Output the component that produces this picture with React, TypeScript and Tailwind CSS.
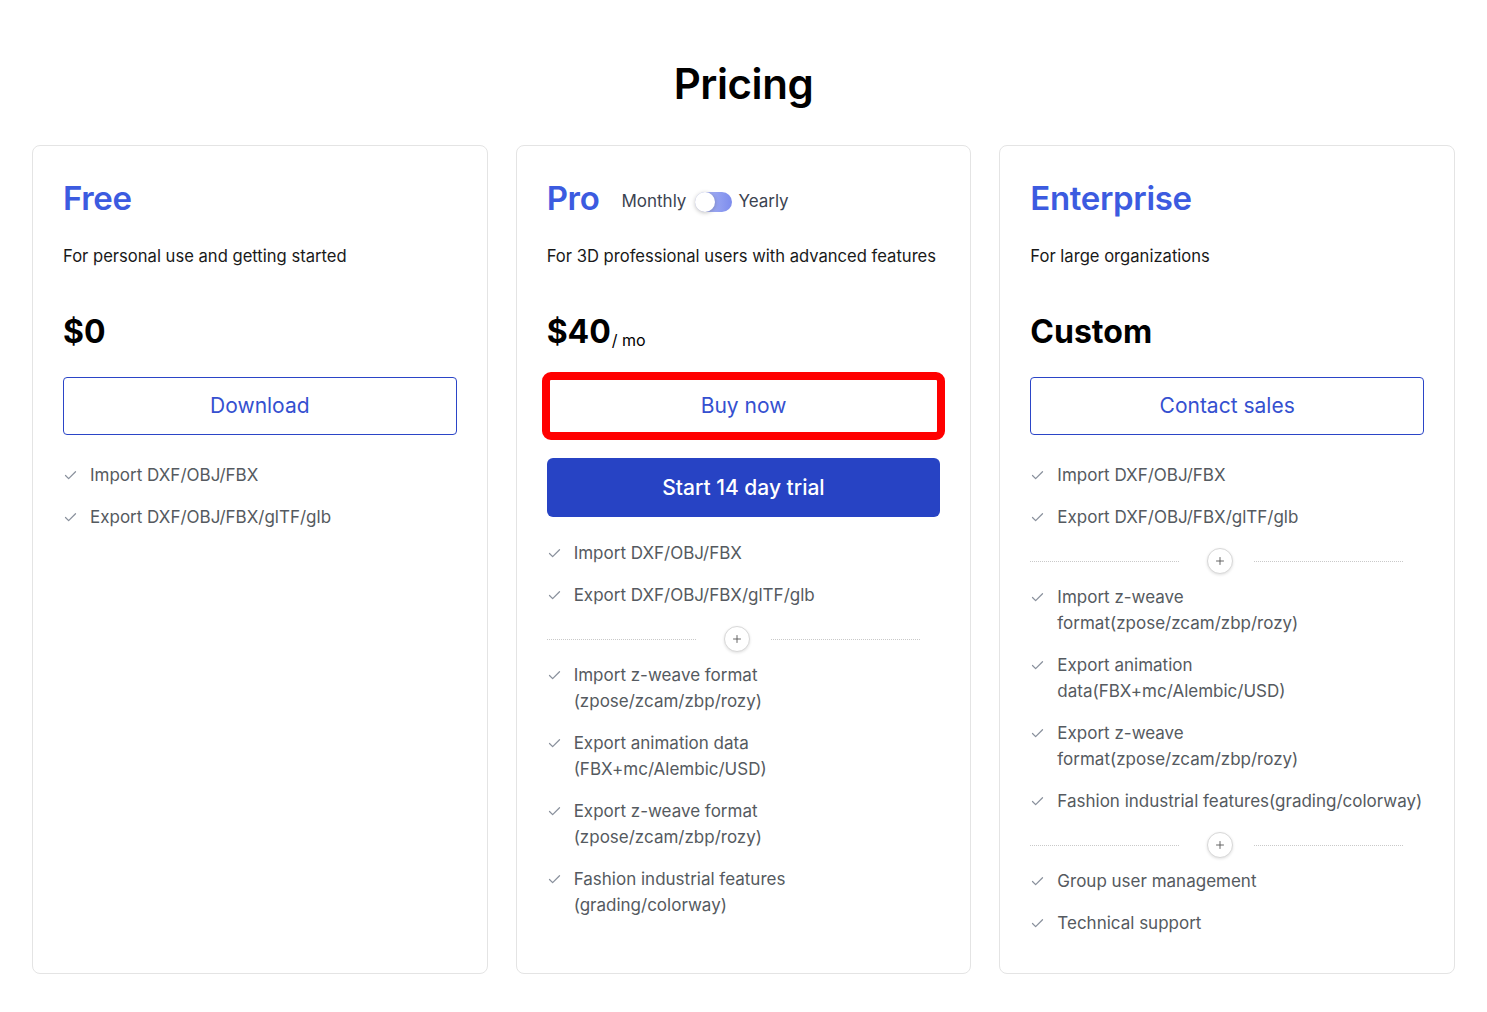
import { Check, Plus } from "lucide-react";

type Item = string | string[] | "divider";

const Feature = ({ text }: { text: string | string[] }) => {
  const lines = Array.isArray(text) ? text : [text];
  return (
    <li className="flex items-start">
      <span className="flex h-[26px] w-[27px] shrink-0 items-center">
        <Check className="h-[15px] w-[15px] text-[#8a919d]" strokeWidth={2} />
      </span>
      <span className="text-[17px] leading-[26px] text-[#555a60]">
        {lines.map((l) => (
          <span key={l} className="block">
            {l}
          </span>
        ))}
      </span>
    </li>
  );
};

const Divider = () => (
  <li className="mt-[2px] -mb-[6px] flex h-[26px] items-center">
    <span className="w-[149px] border-t border-dotted border-[#c9c9c9]" />
    <span className="ml-[28px] flex h-[26px] w-[26px] items-center justify-center rounded-full border border-[#d8d8d8] bg-white shadow-[0_1px_3px_rgba(0,0,0,0.12)]">
      <Plus className="h-[12px] w-[12px] text-[#555]" strokeWidth={1.8} />
    </span>
    <span className="ml-[21px] w-[149px] border-t border-dotted border-[#c9c9c9]" />
  </li>
);

const Features = ({ items, className }: { items: Item[]; className: string }) => (
  <ul className={`flex flex-col gap-4 ${className}`}>
    {items.map((it, i) =>
      it === "divider" ? <Divider key={i} /> : <Feature key={i} text={it} />
    )}
  </ul>
);

const OutlineButton = ({ label, highlight }: { label: string; highlight?: boolean }) => (
  <button
    className={`mt-[25px] h-[58px] w-full rounded-[4px] border border-[#2b45c7] bg-white text-[21px] text-[#3550d0] ${
      highlight ? "outline-[8px] outline-offset-[-3px] outline-[#ff0000] outline-solid" : ""
    }`}
  >
    {label}
  </button>
);

const Card = ({ children }: { children: React.ReactNode }) => (
  <div className="flex flex-col rounded-[8px] border border-[#e4e4e4] bg-white px-[30px] pt-[30px] pb-[37px]">
    {children}
  </div>
);

const Title = ({ children }: { children: React.ReactNode }) => (
  <h2 className="text-[33px] leading-[44px] font-semibold tracking-[-0.01em] text-[#3c5be0]">
    {children}
  </h2>
);

const Desc = ({ children }: { children: React.ReactNode }) => (
  <p className="mt-[24px] text-[16.6px] leading-[24px] whitespace-nowrap text-[#1a1a1a]">{children}</p>
);

export default function App() {
  return (
    <div className="min-h-screen bg-white font-['Inter','Noto_Sans',sans-serif] px-[32px] pb-[39px]">
      <h1 className="pt-[56px] text-center text-[42px] leading-[56px] font-semibold tracking-[-0.01em] text-black">
        Pricing
      </h1>

      <div className="mt-[33px] grid grid-cols-3 gap-[28px]">
        <Card>
          <Title>Free</Title>
          <Desc>For personal use and getting started</Desc>
          <p className="mt-[44px] text-[32px] leading-[40px] font-bold text-black">$0</p>
          <OutlineButton label="Download" />
          <Features
            className="mt-[27px]"
            items={["Import DXF/OBJ/FBX", "Export DXF/OBJ/FBX/glTF/glb"]}
          />
        </Card>

        <Card>
          <div className="flex items-center">
            <Title>Pro</Title>
            <div className="mt-[8px] ml-[22px] flex items-center text-[17px] text-[#3b4351]">
              <span>Monthly</span>
              <span className="ml-[9px] relative h-[20px] w-[37px] rounded-full bg-gradient-to-r from-[#b9c1f5] to-[#7d8ced]">
                <span className="absolute top-0 left-0 h-[20px] w-[20px] rounded-full bg-white shadow-[0_1px_4px_rgba(0,0,0,0.25)]" />
              </span>
              <span className="ml-[6px]">Yearly</span>
            </div>
          </div>
          <Desc>For 3D professional users with advanced features</Desc>
          <p className="mt-[44px] h-[40px] text-[32px] leading-[40px] font-bold text-black">
            $40
            <span className="relative top-[3px] ml-[1px] text-[16px] leading-none font-normal">/ mo</span>
          </p>
          <OutlineButton label="Buy now" highlight />
          <button className="mt-[23px] h-[59px] w-full rounded-[6px] bg-[#2743c4] text-[21px] font-medium text-white">
            Start 14 day trial
          </button>
          <Features
            className="mt-[23px]"
            items={[
              "Import DXF/OBJ/FBX",
              "Export DXF/OBJ/FBX/glTF/glb",
              "divider",
              ["Import z-weave format", "(zpose/zcam/zbp/rozy)"],
              ["Export animation data", "(FBX+mc/Alembic/USD)"],
              ["Export z-weave format", "(zpose/zcam/zbp/rozy)"],
              ["Fashion industrial features", "(grading/colorway)"],
            ]}
          />
        </Card>

        <Card>
          <Title>Enterprise</Title>
          <Desc>For large organizations</Desc>
          <p className="mt-[44px] text-[32px] leading-[40px] font-bold text-black">Custom</p>
          <OutlineButton label="Contact sales" />
          <Features
            className="mt-[27px]"
            items={[
              "Import DXF/OBJ/FBX",
              "Export DXF/OBJ/FBX/glTF/glb",
              "divider",
              ["Import z-weave", "format(zpose/zcam/zbp/rozy)"],
              ["Export animation", "data(FBX+mc/Alembic/USD)"],
              ["Export z-weave", "format(zpose/zcam/zbp/rozy)"],
              "Fashion industrial features(grading/colorway)",
              "divider",
              "Group user management",
              "Technical support",
            ]}
          />
        </Card>
      </div>
    </div>
  );
}
